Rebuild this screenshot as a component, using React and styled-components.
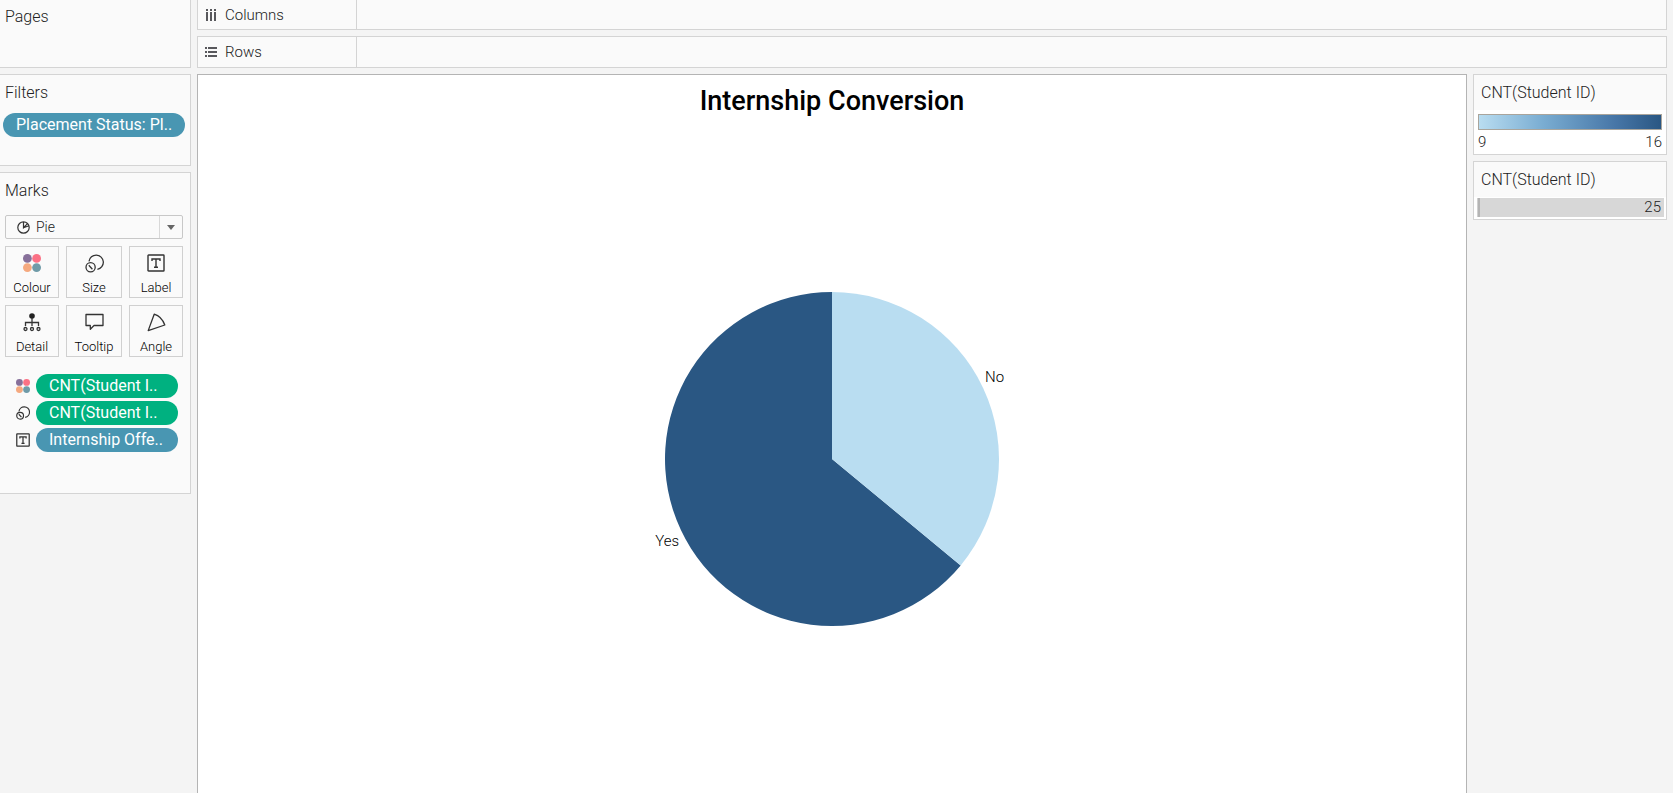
import React from "react";
import styled, { createGlobalStyle } from "styled-components";

const GlobalStyle = createGlobalStyle`
  *, *::before, *::after { box-sizing: border-box; }
  body {
    margin: 0;
    background: #f4f4f4;
    color: #222;
    font-family: Roboto, "Liberation Sans", sans-serif;
    font-size: 15px;
    line-height: 20px;
  }
  button, select { font: inherit; color: inherit; }
`;

const Workspace = styled.div`
  display: grid;
  grid-template-columns: 191px minmax(0, 1fr);
  gap: 6px;
  min-height: 100vh;
  padding-right: 6px;
`;

const Sidebar = styled.aside`
  display: flex;
  flex-direction: column;
  gap: 6px;
`;

const Card = styled.section`
  min-height: ${(p) => p.$minHeight}px;
  padding: ${(p) => (p.$flush ? 7 : 8)}px 7px 8px 5px;
  background: #fafafa;
  border: solid #d4d4d4;
  border-width: ${(p) => (p.$flush ? 0 : 1)}px 1px 1px 0;
`;

const CardTitle = styled.h2`
  margin: 0;
  font-size: 16px;
  font-weight: 300;
  line-height: 20px;
`;

const Pill = styled.button`
  display: block;
  width: 100%;
  height: 24px;
  padding: 0 13px;
  border: 0;
  border-radius: 12px;
  background: ${(p) => (p.$measure ? "#00b180" : "#4996b2")};
  color: #fff;
  font-size: 16px;
  line-height: 24px;
  text-align: left;
  white-space: nowrap;
`;

const FilterList = styled.div`
  margin: 10px -2px 0;
`;

const MarkPicker = styled.label`
  display: grid;
  grid-template-columns: 30px minmax(0, 1fr) 23px;
  align-items: center;
  height: 24px;
  margin-top: 14px;
  border: 1px solid #c8c8c8;
  border-radius: 2px;

  > svg { grid-row: 1; grid-column: 1; justify-self: end; margin-right: 6px; }
`;

const MarkSelect = styled.select`
  grid-row: 1;
  grid-column: 1 / -1;
  height: 22px;
  padding: 0 0 0 30px;
  border: 0;
  background: transparent;
  appearance: none;
  font-size: 14px;
  font-weight: 300;
`;

const SelectArrow = styled.span`
  grid-row: 1;
  grid-column: 3;
  display: flex;
  align-items: center;
  justify-content: center;
  height: 22px;
  border-left: 1px solid #d8d8d8;
  pointer-events: none;
`;

const MarkGrid = styled.div`
  display: grid;
  grid-template-columns: 54px minmax(0, 1fr) 54px;
  gap: 7px;
  margin-top: 7px;
`;

const MarkButton = styled.button`
  display: flex;
  flex-direction: column;
  align-items: center;
  justify-content: space-between;
  height: 52px;
  padding: 7px 0 1px;
  border: 1px solid #d0d0d0;
  background: #fafafa;
  font-size: 13px;
  font-weight: 300;
  line-height: 16px;
  color: #000;
`;

const EncodingList = styled.ul`
  display: grid;
  gap: 3px;
  margin: 17px 5px 0 11px;
  padding: 0;
  list-style: none;
`;

const Encoding = styled.li`
  display: grid;
  grid-template-columns: 14px minmax(0, 1fr);
  gap: 6px;
  align-items: center;
`;

const Main = styled.main`
  display: flex;
  flex-direction: column;
  gap: 6px;
  min-width: 0;
`;

const Shelf = styled.section`
  display: flex;
  height: ${(p) => (p.$flush ? 30 : 32)}px;
  background: #fafafa;
  border: 1px solid #d4d4d4;
  border-top-width: ${(p) => (p.$flush ? 0 : 1)}px;
`;

const ShelfLabel = styled.h2`
  display: flex;
  align-items: center;
  gap: 8px;
  width: 159px;
  margin: 0;
  padding-left: 7px;
  border-right: 1px solid #d4d4d4;
  font-size: 15px;
  font-weight: 300;
`;

const Content = styled.div`
  flex: 1;
  display: grid;
  grid-template-columns: minmax(0, 1fr) 194px;
  gap: 6px;
`;

const View = styled.section`
  display: flex;
  flex-direction: column;
  background: #fff;
  border: 1px solid #b4b4b4;
  border-bottom: 0;
`;

const ViewTitle = styled.h1`
  margin: 0;
  padding-top: 2px;
  font-size: 27px;
  font-weight: 500;
  line-height: 48px;
  text-align: center;
  color: #000;
`;

const Plot = styled.div`
  flex: 1;
  display: flex;
  align-items: center;
  justify-content: center;
`;

const PieLabel = styled.text`
  font-size: 15px;
  font-weight: 300;
  fill: #000;
`;

const Legends = styled.aside`
  display: flex;
  flex-direction: column;
  gap: 6px;
`;

const Legend = styled.section`
  background: #fff;
  border: 1px solid #d4d4d4;
`;

const LegendTitle = styled.h2`
  margin: 0;
  padding: 8px 7px 7px;
  background: #fafafa;
  font-size: 16px;
  font-weight: 300;
  line-height: 20px;
`;

const Ramp = styled.div`
  height: 16px;
  margin: 4px 4px 0;
  border: 1px solid #aaa59c;
  background: linear-gradient(90deg, #b9ddf1, #7aadd2 35%, #4776a7 75%, #2a5783);
`;

const RampRange = styled.div`
  display: flex;
  justify-content: space-between;
  padding: 2px 4px;
  font-weight: 300;
`;

const SizeBar = styled.div`
  height: 19px;
  margin: 1px 2px 2px 3px;
  padding-right: 3px;
  background: #d7d7d7;
  box-shadow: inset 1px 0 #d0d0d0, inset 3px 0 #b4b4b4;
  font-weight: 300;
  line-height: 19px;
  text-align: right;
`;

const ColourIcon = ({ size = 18 }) => (
  <svg width={size} height={size} viewBox="0 0 18 18" aria-hidden="true">
    <circle cx="4.4" cy="4.4" r="4.4" fill="#87709a" />
    <circle cx="13.6" cy="4.4" r="4.4" fill="#fb7185" />
    <circle cx="4.4" cy="13.6" r="4.4" fill="#f5a97f" />
    <circle cx="13.6" cy="13.6" r="4.4" fill="#6f9ba8" />
  </svg>
);

const SizeIcon = ({ size = 19 }) => (
  <svg width={size} height={size} viewBox="0 0 19 19" fill="none" stroke="#333" strokeWidth={size < 18 ? 1.6 : 1.3} aria-hidden="true">
    <path d="M4 7.4A7.2 7.2 0 1 1 12.4 15.4" />
    <circle cx="5.6" cy="13.2" r="4.6" />
    <path d="M3.8 11.2l3.6 4" />
  </svg>
);

const LabelIcon = ({ size = 18 }) => (
  <svg width={size} height={size} viewBox="0 0 18 18" fill="none" stroke="#333" strokeWidth={size < 18 ? 1.6 : 1.4} aria-hidden="true">
    <rect x="1" y="1" width="16" height="16" rx="0.6" />
    <path d="M5 7V5h8v2M9 5v8.2M7 13.2h4" />
  </svg>
);

const DetailIcon = () => (
  <svg width="18" height="19" viewBox="0 0 18 19" fill="none" stroke="#333" strokeWidth="1.3" aria-hidden="true">
    <circle cx="9" cy="3" r="2.8" fill="#222" stroke="none" />
    <path d="M9 5v8M2.5 13v-3.5h13V13" />
    <circle cx="2.5" cy="16" r="1.5" />
    <circle cx="9" cy="16" r="1.5" />
    <circle cx="15.5" cy="16" r="1.5" />
  </svg>
);

const TooltipIcon = () => (
  <svg width="19" height="18" viewBox="0 0 19 18" fill="none" stroke="#333" strokeWidth="1.3" strokeLinejoin="round" aria-hidden="true">
    <path d="M1 1.5h17v11H9l-3.7 3.8v-3.8H1z" />
  </svg>
);

const AngleIcon = () => (
  <svg width="19" height="19" viewBox="0 0 19 19" fill="none" stroke="#333" strokeWidth="1.3" strokeLinejoin="round" aria-hidden="true">
    <path d="M1.2 17.6L7.2 1.2Q14.6 3.4 17.8 12z" />
  </svg>
);

const PieIcon = () => (
  <svg width="13" height="13" viewBox="0 0 13 13" fill="none" stroke="#333" strokeWidth="1.2" aria-hidden="true">
    <circle cx="6.5" cy="6.5" r="5.7" />
    <path d="M6.5 1v5.7l4-4M6.5 6.7l5.5-2" />
  </svg>
);

const ColumnsIcon = () => (
  <svg width="12" height="12" viewBox="0 0 12 12" fill="#58585c" aria-hidden="true">
    <path d="M1 0h2v2H1zM5 0h2v2H5zM9 0h2v2H9zM1 3h2v9H1zM5 3h2v9H5zM9 3h2v9H9z" />
  </svg>
);

const RowsIcon = () => (
  <svg width="12" height="12" viewBox="0 0 12 12" fill="#58585c" aria-hidden="true">
    <path d="M0 1h2v2H0zM0 5h2v2H0zM0 9h2v2H0zM3 1h9v2H3zM3 5h9v2H3zM3 9h9v2H3z" />
  </svg>
);

const markButtons = [
  ["Colour", ColourIcon],
  ["Size", SizeIcon],
  ["Label", LabelIcon],
  ["Detail", DetailIcon],
  ["Tooltip", TooltipIcon],
  ["Angle", AngleIcon],
];

const RADIUS = 167;
const noAngle = (9 / 25) * 2 * Math.PI;
const edgeX = RADIUS * Math.sin(noAngle);
const edgeY = -RADIUS * Math.cos(noAngle);

export default function App() {
  return (
    <>
      <GlobalStyle />
      <Workspace>
        <Sidebar>
          <Card $flush $minHeight={68}>
            <CardTitle>Pages</CardTitle>
          </Card>
          <Card $minHeight={92}>
            <CardTitle>Filters</CardTitle>
            <FilterList>
              <Pill type="button">Placement Status: Pl..</Pill>
            </FilterList>
          </Card>
          <Card $minHeight={322}>
            <CardTitle>Marks</CardTitle>
            <MarkPicker>
              <PieIcon />
              <MarkSelect aria-label="Mark type" defaultValue="Pie">
                <option>Pie</option>
              </MarkSelect>
              <SelectArrow>
                <svg width="8" height="5" viewBox="0 0 8 5" aria-hidden="true">
                  <path d="M0 0h8L4 5z" fill="#666" />
                </svg>
              </SelectArrow>
            </MarkPicker>
            <MarkGrid>
              {markButtons.map(([name, Icon]) => (
                <MarkButton key={name} type="button">
                  <Icon />
                  {name}
                </MarkButton>
              ))}
            </MarkGrid>
            <EncodingList>
              <Encoding>
                <ColourIcon size={14} />
                <Pill type="button" $measure>CNT(Student I..</Pill>
              </Encoding>
              <Encoding>
                <SizeIcon size={14} />
                <Pill type="button" $measure>CNT(Student I..</Pill>
              </Encoding>
              <Encoding>
                <LabelIcon size={14} />
                <Pill type="button">Internship Offe..</Pill>
              </Encoding>
            </EncodingList>
          </Card>
        </Sidebar>
        <Main>
          <Shelf $flush>
            <ShelfLabel><ColumnsIcon />Columns</ShelfLabel>
          </Shelf>
          <Shelf>
            <ShelfLabel><RowsIcon />Rows</ShelfLabel>
          </Shelf>
          <Content>
            <View>
              <ViewTitle>Internship Conversion</ViewTitle>
              <Plot>
                <svg width="400" height="334" viewBox="-200 -167 400 334" role="img" aria-label="Internship conversion pie chart">
                  <path d={`M0 0L${edgeX} ${edgeY}A${RADIUS} ${RADIUS} 0 1 1 0 ${-RADIUS}Z`} fill="#2a5783" />
                  <path d={`M0 0V${-RADIUS}A${RADIUS} ${RADIUS} 0 0 1 ${edgeX} ${edgeY}Z`} fill="#b9ddf1" />
                  <PieLabel x="153" y="-77">No</PieLabel>
                  <PieLabel x="-153" y="87" textAnchor="end">Yes</PieLabel>
                </svg>
              </Plot>
            </View>
            <Legends>
              <Legend>
                <LegendTitle>CNT(Student ID)</LegendTitle>
                <Ramp />
                <RampRange><span>9</span><span>16</span></RampRange>
              </Legend>
              <Legend>
                <LegendTitle>CNT(Student ID)</LegendTitle>
                <SizeBar>25</SizeBar>
              </Legend>
            </Legends>
          </Content>
        </Main>
      </Workspace>
    </>
  );
}
